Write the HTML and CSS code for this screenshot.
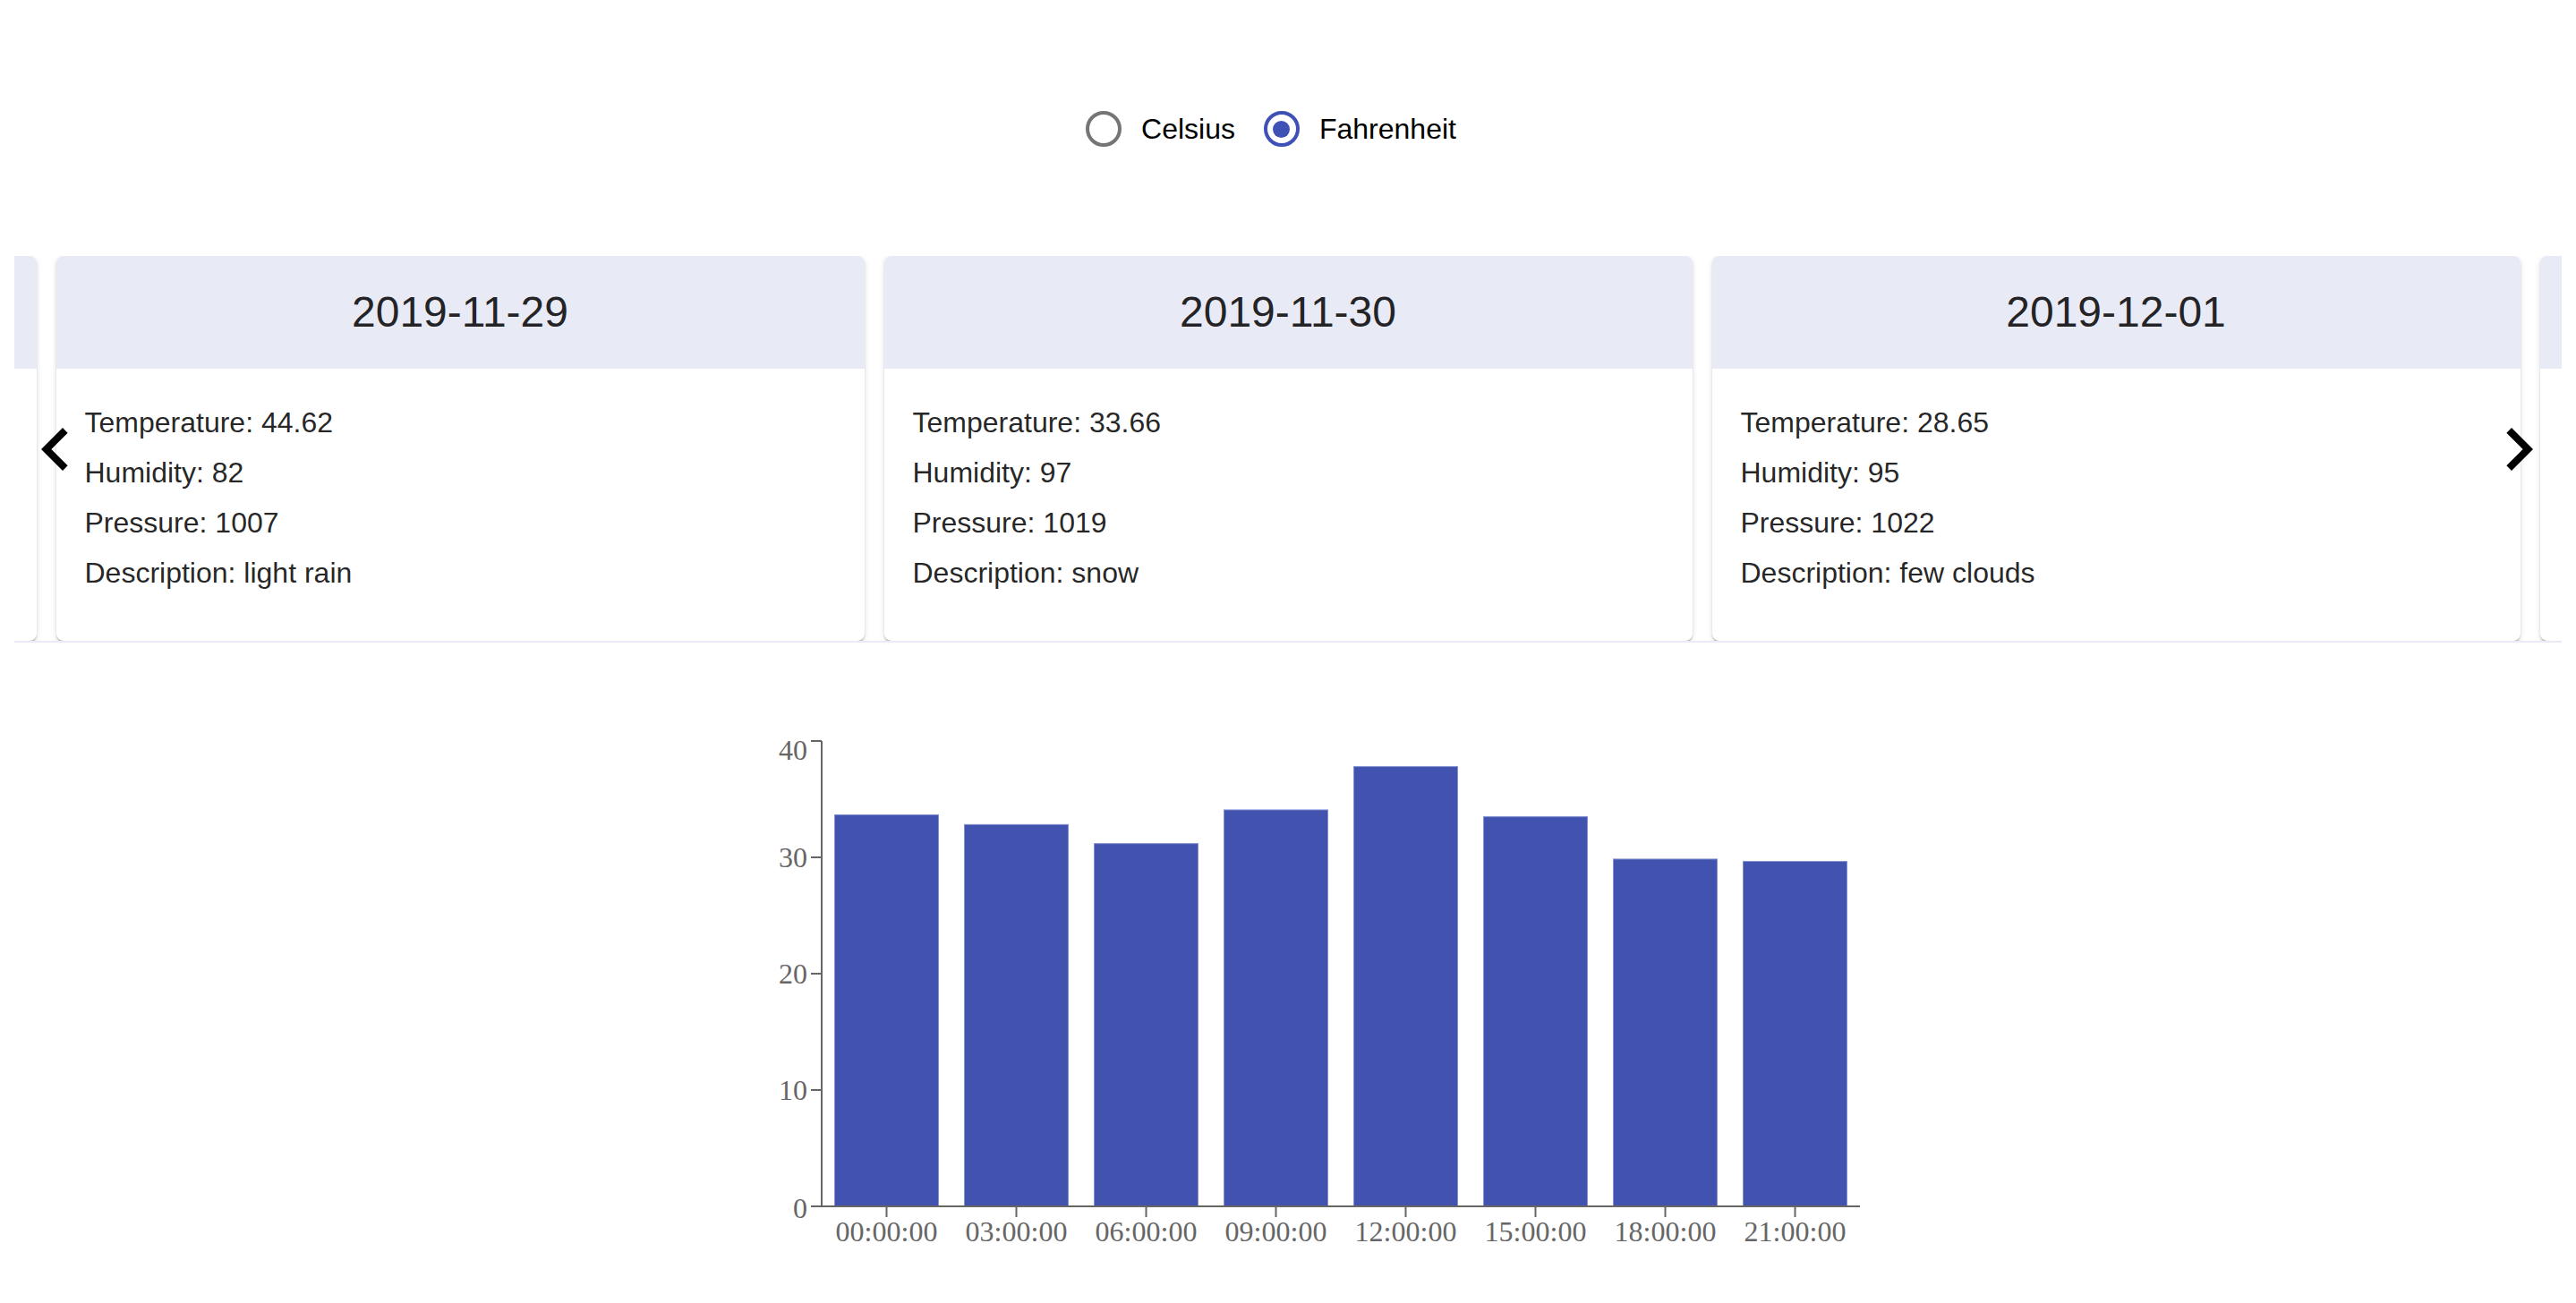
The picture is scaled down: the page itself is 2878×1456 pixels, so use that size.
FILE: index.html
```html
<!DOCTYPE html>
<html lang="en">
<head>
<meta charset="utf-8">
<title>Weather forecast</title>
<link rel="stylesheet" href="styles.css">
</head>
<body>
<div class="units" role="radiogroup">
  <label class="unit">
    <span class="radio"><span class="ring"></span></span>
    <span class="unit-label">Celsius</span>
  </label>
  <label class="unit">
    <span class="radio checked"><span class="ring"><span class="dot"></span></span></span>
    <span class="unit-label">Fahrenheit</span>
  </label>
</div>

<div class="carousel">
  <div class="viewport">
    <div class="track">
      <div class="card peek" aria-hidden="true">
        <div class="card-head"></div>
        <div class="card-body"></div>
      </div>
      <div class="card">
        <div class="card-head"><h2 class="card-title">2019-11-29</h2></div>
        <div class="card-body">
          <p class="line">Temperature: 44.62</p>
          <p class="line">Humidity: 82</p>
          <p class="line">Pressure: 1007</p>
          <p class="line">Description: light rain</p>
        </div>
      </div>
      <div class="card">
        <div class="card-head"><h2 class="card-title">2019-11-30</h2></div>
        <div class="card-body">
          <p class="line">Temperature: 33.66</p>
          <p class="line">Humidity: 97</p>
          <p class="line">Pressure: 1019</p>
          <p class="line">Description: snow</p>
        </div>
      </div>
      <div class="card">
        <div class="card-head"><h2 class="card-title">2019-12-01</h2></div>
        <div class="card-body">
          <p class="line">Temperature: 28.65</p>
          <p class="line">Humidity: 95</p>
          <p class="line">Pressure: 1022</p>
          <p class="line">Description: few clouds</p>
        </div>
      </div>
      <div class="card peek" aria-hidden="true">
        <div class="card-head"></div>
        <div class="card-body"></div>
      </div>
    </div>
  </div>
  <button class="arrow arrow-left" aria-label="Previous">
    <svg viewBox="0 0 24 24" width="96" height="96"><path d="M15.41 7.41L14 6l-6 6 6 6 1.41-1.41L10.83 12z"/></svg>
  </button>
  <button class="arrow arrow-right" aria-label="Next">
    <svg viewBox="0 0 24 24" width="96" height="96"><path d="M10 6L8.59 7.41 13.17 12l-4.58 4.59L10 18l6-6z"/></svg>
  </button>
</div>

<div class="chart-wrap">
  <svg class="chart" width="1400" height="620" viewBox="0 0 1400 620">
    <g class="bars">
      <rect x="193.5" y="110.55" width="116" height="437.45"/>
      <rect x="338.5" y="121.34" width="116" height="426.66"/>
      <rect x="483.5" y="142.66" width="116" height="405.34"/>
      <rect x="628.5" y="104.96" width="116" height="443.04"/>
      <rect x="773.5" y="56.6" width="116" height="491.4"/>
      <rect x="918.5" y="112.63" width="116" height="435.37"/>
      <rect x="1063.5" y="159.95" width="116" height="388.05"/>
      <rect x="1208.5" y="162.55" width="116" height="385.45"/>
    </g>
    <g class="axis">
      <line x1="179" y1="28" x2="179" y2="548"/>
      <line x1="167" y1="548" x2="179" y2="548"/>
      <line x1="167" y1="418" x2="179" y2="418"/>
      <line x1="167" y1="288" x2="179" y2="288"/>
      <line x1="167" y1="158" x2="179" y2="158"/>
      <line x1="167" y1="28" x2="179" y2="28"/>
      <line x1="179" y1="548" x2="1339" y2="548"/>
      <line x1="251.5" y1="548" x2="251.5" y2="560"/>
      <line x1="396.5" y1="548" x2="396.5" y2="560"/>
      <line x1="541.5" y1="548" x2="541.5" y2="560"/>
      <line x1="686.5" y1="548" x2="686.5" y2="560"/>
      <line x1="831.5" y1="548" x2="831.5" y2="560"/>
      <line x1="976.5" y1="548" x2="976.5" y2="560"/>
      <line x1="1121.5" y1="548" x2="1121.5" y2="560"/>
      <line x1="1266.5" y1="548" x2="1266.5" y2="560"/>
    </g>
    <g class="ylabels">
      <text x="163" y="550" dy="0.355em">0</text>
      <text x="163" y="418" dy="0.355em">10</text>
      <text x="163" y="288" dy="0.355em">20</text>
      <text x="163" y="158" dy="0.355em">30</text>
      <text x="163" y="38" dy="0.355em">40</text>
    </g>
    <g class="xlabels">
      <text x="251.5" y="564" dy="0.71em">00:00:00</text>
      <text x="396.5" y="564" dy="0.71em">03:00:00</text>
      <text x="541.5" y="564" dy="0.71em">06:00:00</text>
      <text x="686.5" y="564" dy="0.71em">09:00:00</text>
      <text x="831.5" y="564" dy="0.71em">12:00:00</text>
      <text x="976.5" y="564" dy="0.71em">15:00:00</text>
      <text x="1121.5" y="564" dy="0.71em">18:00:00</text>
      <text x="1266.5" y="564" dy="0.71em">21:00:00</text>
    </g>
  </svg>
</div>
</body>
</html>
```

FILE: styles.css
```css
html, body {
  background: #ffffff;
}

body {
  margin: 16px;
  font-family: "Liberation Sans", Arial, Helvetica, sans-serif;
  color: rgba(0, 0, 0, 0.87);
}

/* unit switch */
.units {
  display: flex;
  justify-content: center;
  margin-top: 86px;
  padding-right: 6px;
}

.unit {
  display: inline-flex;
  align-items: center;
  margin-left: -22px;
  margin-right: 32px;
  cursor: pointer;
}

.radio {
  width: 84px;
  height: 84px;
  display: flex;
  align-items: center;
  justify-content: center;
}

.ring {
  width: 40px;
  height: 40px;
  box-sizing: border-box;
  border: 4px solid #757575;
  border-radius: 50%;
  display: flex;
  align-items: center;
  justify-content: center;
}

.checked .ring {
  border-color: #3f51b5;
}

.dot {
  width: 19px;
  height: 19px;
  border-radius: 50%;
  background: #3f51b5;
}

.unit-label {
  font-size: 32px;
  line-height: 48px;
  color: #000;
}

/* carousel */
.carousel {
  position: relative;
  margin-top: 100px;
}

.viewport {
  overflow: hidden;
  border-bottom: 2px solid #e8eaf6;
}

.track {
  display: flex;
  justify-content: center;
  gap: 22px;
}

.card {
  flex: 0 0 903px;
  width: 903px;
  background: #fff;
  border-radius: 8px;
  overflow: hidden;
  box-shadow: 0 4px 2px -2px rgba(0, 0, 0, 0.2),
              0 2px 2px 0 rgba(0, 0, 0, 0.14),
              0 2px 6px 0 rgba(0, 0, 0, 0.12);
}

.card-head {
  height: 126px;
  background: #e8eaf6;
  display: flex;
  align-items: center;
  justify-content: center;
}

.card-title {
  margin: 0;
  font-size: 48px;
  font-weight: 400;
  line-height: 64px;
  color: rgba(0, 0, 0, 0.87);
}

.card-body {
  padding: 32px 32px 48px;
}

.peek .card-body {
  height: 224px;
}

.line {
  margin: 0;
  font-size: 32px;
  line-height: 56px;
  color: rgba(0, 0, 0, 0.87);
  white-space: nowrap;
}

.arrow {
  position: absolute;
  top: 50%;
  transform: translateY(-50%);
  width: 96px;
  height: 96px;
  padding: 0;
  border: 0;
  background: none;
  cursor: pointer;
}

.arrow svg {
  display: block;
  fill: #000;
}

.arrow-left {
  left: -2px;
}

.arrow-right {
  right: 0;
}

/* chart */
.chart-wrap {
  display: flex;
  justify-content: center;
  margin-top: 82px;
}

.chart {
  display: block;
  overflow: visible;
}

.bars rect {
  fill: #4253af;
  stroke: #8691d2;
  stroke-width: 1;
}

.axis line {
  stroke: #666;
  stroke-width: 2;
}

.chart text {
  font-family: "Liberation Serif", "Times New Roman", serif;
  font-size: 32px;
  fill: #666;
}

.ylabels text {
  text-anchor: end;
}

.xlabels text {
  text-anchor: middle;
}
```
